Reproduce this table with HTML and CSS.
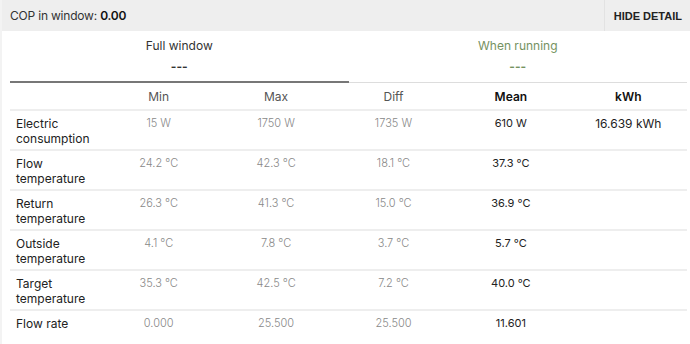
FILE: index.html
```html
<!DOCTYPE html>
<html>
	<head>
		<meta charset="utf-8">
		<title>COP detail</title>
		<link rel="stylesheet" href="styles.css">
	</head>
	<body>
		<div class="panel">
			<div class="topbar">
				<div class="cop">COP in window: <b>0.00</b></div>
				<button class="hide-btn">HIDE DETAIL</button>
			</div>

			<div class="tabs">
				<div class="tab active">
					<div class="tab-title">Full window</div>
					<div class="tab-value">---</div>
				</div>
				<div class="tab running">
					<div class="tab-title">When running</div>
					<div class="tab-value">---</div>
				</div>
			</div>

			<table class="stats">
				<thead>
					<tr>
						<th class="label"></th>
						<th>Min</th>
						<th>Max</th>
						<th>Diff</th>
						<th class="strong">Mean</th>
						<th class="strong">kWh</th>
					</tr>
				</thead>
				<tbody>
					<tr>
						<td class="label">Electric consumption</td>
						<td>15 W</td><td>1750 W</td><td>1735 W</td>
						<td class="strong">610 W</td><td class="strong kwh">16.639 kWh</td>
					</tr>
					<tr>
						<td class="label">Flow temperature</td>
						<td>24.2 °C</td><td>42.3 °C</td><td>18.1 °C</td>
						<td class="strong">37.3 °C</td><td class="strong"></td>
					</tr>
					<tr>
						<td class="label">Return temperature</td>
						<td>26.3 °C</td><td>41.3 °C</td><td>15.0 °C</td>
						<td class="strong">36.9 °C</td><td class="strong"></td>
					</tr>
					<tr>
						<td class="label">Outside temperature</td>
						<td>4.1 °C</td><td>7.8 °C</td><td>3.7 °C</td>
						<td class="strong">5.7 °C</td><td class="strong"></td>
					</tr>
					<tr>
						<td class="label">Target temperature</td>
						<td>35.3 °C</td><td>42.5 °C</td><td>7.2 °C</td>
						<td class="strong">40.0 °C</td><td class="strong"></td>
					</tr>
					<tr>
						<td class="label">Flow rate</td>
						<td>0.000</td><td>25.500</td><td>25.500</td>
						<td class="strong">11.601</td><td class="strong"></td>
					</tr>
				</tbody>
			</table>
		</div>
	</body>
</html>
```

FILE: styles.css
```css
*
{
	box-sizing: border-box;
}
body
{
	margin: 0;
	padding: 0;
	font-family: Inter, "Open Sans", sans-serif;
	font-size: 11px;
	color: #222;
	background: #fff;
}
.panel{
	border-left: 2px solid #f3f3f3;
	min-height: 344px;
}
.topbar{
	display: flex;
	align-items: center;
	justify-content: space-between;
	height: 31px;
	background: #eeeeee;
}
.cop{
	padding-left: 8px;
	font-size: 12px;
	color: #333;
	letter-spacing: -0.2px;
}
.cop b{
	font-weight: 600;
	color: #111;
}
.hide-btn{
	height: 31px;
	padding: 0 8px 0 9px;
	border: none;
	border-left: 1px solid #e2e2e2;
	background: #eeeeee;
	font-family: "Liberation Sans", Arial, sans-serif;
	font-weight: bold;
	font-size: 11px;
	color: #222;
}

.tabs{
	display: flex;
	margin: 0 3px 0 8px;
	padding-top: 7px;
}
.tab{
	flex: 1;
	text-align: center;
	border-bottom: 1px solid #dddddd;
	padding-bottom: 7px;
}
.tab.active{
	border-bottom: 2px solid #777;
	padding-bottom: 6px;
}
.tab-title{
	font-size: 12px;
	color: #333;
	line-height: 16px;
}
.tab-value{
	margin-top: 5px;
	font-size: 12px;
	font-weight: 700;
	line-height: 16px;
	color: #333;
}
.running .tab-title,
.running .tab-value{
	color: #75925f;
}

.stats{
	width: 677px;
	margin-left: 8px;
	border-collapse: collapse;
	table-layout: fixed;
}
.stats th{
	height: 27px;
	font-weight: normal;
	font-size: 12px;
	color: #555;
	padding-top: 1px;
	border-bottom: 2px solid #eeeeee;
}
.stats th.label{
	width: 90px;
}
.stats th.strong{
	font-weight: 600;
	color: #111;
}
.stats td{
	height: 40px;
	vertical-align: top;
	text-align: center;
	padding-top: 5px;
	line-height: 15px;
	font-weight: 300;
	color: #888;
	border-bottom: 2px solid #eeeeee;
}
.stats td.label{
	text-align: left;
	padding-left: 6px;
	padding-right: 2px;
	font-weight: normal;
	color: #222;
	font-size: 12px;
}
.stats td.strong{
	font-weight: normal;
	color: #222;
}
.stats td.kwh{
	font-size: 12px;
}
```
